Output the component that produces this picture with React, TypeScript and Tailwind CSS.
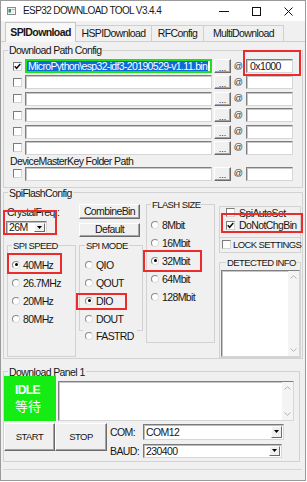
import React from "react";

const FONT = "font-['Liberation_Sans',Arial,sans-serif]";

const Check = ({ checked = false }: { checked?: boolean }) => (
  <span className="inline-flex items-center justify-center w-[9px] h-[9px] shrink-0 bg-white border border-t-[#7c7c7c] border-l-[#7c7c7c] border-r-[#d4d4d4] border-b-[#d4d4d4]">
    {checked && (
      <svg width="7" height="7" viewBox="0 0 7 7">
        <path d="M0.7 3.3 L2.6 5.3 L6.3 1.1" fill="none" stroke="#111" strokeWidth="1.5" />
      </svg>
    )}
  </span>
);

const Radio = ({ checked = false, label }: { checked?: boolean; label: string }) => (
  <div className="flex items-center h-[18px] whitespace-nowrap">
    <span className="inline-flex items-center justify-center w-[8px] h-[8px] shrink-0 rounded-full bg-white border border-t-[#8a8a8a] border-l-[#8a8a8a] border-r-[#dedede] border-b-[#dedede]">
      {checked && <span className="w-[3px] h-[3px] rounded-full bg-black" />}
    </span>
    <span className="ml-[3px] leading-none">{label}</span>
  </div>
);

const Field = ({ className = "", children }: { className?: string; children?: React.ReactNode }) => (
  <div
    className={`bg-white border border-t-[#7f7f7f] border-l-[#7f7f7f] border-r-[#d6d6d6] border-b-[#d6d6d6] shadow-[inset_1px_1px_0_#c6c6c6] ${className}`}
  >
    {children}
  </div>
);

const Btn = ({ className = "", children }: { className?: string; children?: React.ReactNode }) => (
  <div
    className={`flex items-center justify-center whitespace-nowrap bg-[#f0f0f0] border border-t-white border-l-white border-r-[#6b6b6b] border-b-[#6b6b6b] shadow-[inset_-1px_-1px_0_#a3a3a3] ${className}`}
  >
    {children}
  </div>
);

const Arrow = () => (
  <span className="m-[1px] w-[11px] shrink-0 flex items-center justify-center bg-[#f0f0f0] border border-t-white border-l-white border-r-[#6b6b6b] border-b-[#6b6b6b]">
    <svg width="5" height="3" viewBox="0 0 5 3">
      <path d="M0 0H5L2.5 3Z" fill="#000" />
    </svg>
  </span>
);

const Select = ({ value, className = "" }: { value: string; className?: string }) => (
  <div
    className={`flex bg-white border border-t-[#7a7a7a] border-l-[#7a7a7a] border-r-[#d6d6d6] border-b-[#d6d6d6] shadow-[inset_1px_1px_0_#bdbdbd] ${className}`}
  >
    <span className="flex-1 pl-[2px] flex items-center leading-none">{value}</span>
    <Arrow />
  </div>
);

const ScrollBar = () => (
  <div className="w-[11px] h-full bg-[#f4f4f4] flex flex-col items-center justify-between py-[4px]">
    <svg width="7" height="4" viewBox="0 0 7 4">
      <path d="M0.5 3.5 L3.5 0.7 L6.5 3.5" fill="none" stroke="#b4b4b4" />
    </svg>
    <svg width="7" height="4" viewBox="0 0 7 4">
      <path d="M0.5 0.5 L3.5 3.3 L6.5 0.5" fill="none" stroke="#b4b4b4" />
    </svg>
  </div>
);

const PathRow = ({ first = false }: { first?: boolean }) => (
  <div className="flex items-center h-[14px]">
    <Check checked={first} />
    {first ? (
      <div className="ml-[3px] w-[187px] h-[14px] bg-white border-2 border-[#1ee01e] flex items-stretch">
        <span className="bg-[#0c6bd6] text-white leading-[10px] pl-[1px] pr-[1px] tracking-[-0.65px] whitespace-nowrap overflow-hidden">
          MicroPython\esp32-idf3-20190529-v1.11.bin
        </span>
      </div>
    ) : (
      <Field className="ml-[3px] w-[187px] h-[14px]" />
    )}
    <Btn className="ml-[2px] w-[17px] h-[14px]">
      <span className="text-[9px] leading-none -mb-[4px] tracking-normal">...</span>
    </Btn>
    <span className="ml-[2px] w-[10px] text-[9px] leading-none text-[#333] text-center">@</span>
    <Field className="ml-[3px] w-[47px] h-[14px] flex items-center">
      {first && <span className="pl-[3px] leading-none">0x1000</span>}
    </Field>
  </div>
);

const Red = ({ className }: { className: string }) => (
  <div className={`absolute border-2 border-[#ec2c2c] pointer-events-none ${className}`} />
);

export default function App() {
  return (
    <div
      className={`relative w-[307px] h-[482px] bg-white overflow-hidden text-[10.5px] tracking-[-0.6px] text-[#161616] ${FONT}`}
    >
      <div className="w-[306px] h-[481px] border border-[#9a9a9a] bg-[#f0f0f0] flex flex-col">
        {/* Title bar */}
        <div className="h-[20px] shrink-0 bg-white flex items-center">
          <div className="ml-[6px] flex">
            <svg width="9" height="8" viewBox="0 0 9 8">
              <rect x="0.5" y="0.5" width="8" height="7" fill="#f2f2f2" stroke="#8a8a8a" />
              <rect x="1.5" y="2" width="2.5" height="3.5" fill="#2f8f7f" />
              <rect x="4.8" y="2" width="2.7" height="1" fill="#9bb5c0" />
            </svg>
          </div>
          <span className="ml-[7px] text-[10px] leading-none text-[#1a1a1a] whitespace-nowrap">
            ESP32 DOWNLOAD TOOL V3.4.4
          </span>
          <div className="ml-auto mr-[1px] flex h-full">
            <div className="w-[32px] flex items-center justify-center">
              <svg width="10" height="1" viewBox="0 0 10 1">
                <rect width="10" height="1" fill="#111" />
              </svg>
            </div>
            <div className="w-[32px] flex items-center justify-center">
              <svg width="9" height="9" viewBox="0 0 9 9">
                <rect x="0.5" y="0.5" width="8" height="8" fill="none" stroke="#111" />
              </svg>
            </div>
            <div className="w-[32px] flex items-center justify-center">
              <svg width="9" height="9" viewBox="0 0 9 9">
                <path d="M0.5 0.5L8.5 8.5M8.5 0.5L0.5 8.5" stroke="#111" />
              </svg>
            </div>
          </div>
        </div>

        {/* Tabs */}
        <div className="h-[21px] shrink-0 flex items-end pl-[4px] border-b border-[#cfcfcf] whitespace-nowrap">
          <div className="relative z-10 -mb-px h-[20px] w-[71px] bg-[#f7f7f7] border border-b-0 border-[#c8c8c8] flex items-center justify-center font-bold">
            SPIDownload
          </div>
          <div className="h-[16px] w-[76px] border border-b-0 border-l-0 border-[#cfcfcf] flex items-center justify-center">
            HSPIDownload
          </div>
          <div className="h-[16px] w-[52px] border border-b-0 border-l-0 border-[#cfcfcf] flex items-center justify-center">
            RFConfig
          </div>
          <div className="h-[16px] w-[80px] border border-b-0 border-l-0 border-[#cfcfcf] flex items-center justify-center">
            MultiDownload
          </div>
        </div>

        {/* Page */}
        <div className="flex flex-col pl-[2px] whitespace-nowrap">
          {/* Download Path Config */}
          <fieldset className="mt-[2px] w-[300px] border border-[#d2d2d2] pb-[6px]">
            <legend className="ml-[4px] px-[1px] leading-[12px]">Download Path Config</legend>
            <div className="flex flex-col pl-[9px] pt-[3px] gap-[2.4px]">
              <PathRow first />
              <PathRow />
              <PathRow />
              <PathRow />
              <PathRow />
              <PathRow />
            </div>
            <div className="pl-[6px] h-[12px] leading-[12px]">DeviceMasterKey Folder Path</div>
            <div className="pl-[9px]">
              <PathRow />
            </div>
          </fieldset>

          {/* SpiFlashConfig */}
          <fieldset className="w-[300px] border border-[#d2d2d2]">
            <legend className="ml-[4px] px-[1px] leading-[10px]">SpiFlashConfig</legend>
            <div className="flex items-start">
              {/* Col A */}
              <div className="ml-[2px] w-[71px] flex flex-col">
                <div className="mt-[8px] pl-[1px] leading-[12px] h-[12px]">CrystalFreq :</div>
                <Select value="26M" className="mt-[3px] w-[41px] h-[13px]" />
                <fieldset className="mt-[7px] ml-[1px] w-[69px] border border-[#d2d2d2] pb-[28px]">
                  <legend className="ml-[4px] px-[1px] leading-[10px] text-[9.5px]">SPI SPEED</legend>
                  <div className="pl-[4px] pt-[5px] flex flex-col">
                    <Radio checked label="40MHz" />
                    <Radio label="26.7MHz" />
                    <Radio label="20MHz" />
                    <Radio label="80MHz" />
                  </div>
                </fieldset>
              </div>

              {/* Col B */}
              <div className="ml-[2px] w-[64px] flex flex-col">
                <Btn className="mt-[6px] w-[61px] h-[15px]">CombineBin</Btn>
                <Btn className="mt-[4px] w-[61px] h-[14px]">Default</Btn>
                <fieldset className="mt-[4px] w-[64px] border border-[#d2d2d2] pb-[2px]">
                  <legend className="ml-[5px] px-[1px] leading-[10px] text-[9.5px]">SPI MODE</legend>
                  <div className="pl-[5px] pt-[5px] flex flex-col">
                    <Radio label="QIO" />
                    <Radio label="QOUT" />
                    <Radio checked label="DIO" />
                    <Radio label="DOUT" />
                  </div>
                </fieldset>
                <div className="relative -mt-[4px] ml-[4px] w-[54px] bg-[#f0f0f0] pl-[2px]">
                  <Radio label="FASTRD" />
                </div>
              </div>

              {/* Col C */}
              <div className="ml-[3px] w-[69px] flex flex-col">
                <fieldset className="mt-[2px] w-[69px] border border-[#d2d2d2] pb-[36px]">
                  <legend className="ml-[4px] px-[1px] leading-[10px] text-[9.5px]">FLASH SIZE</legend>
                  <div className="pl-[4px] pt-[6px] flex flex-col">
                    <Radio label="8Mbit" />
                    <Radio label="16Mbit" />
                    <Radio checked label="32Mbit" />
                    <Radio label="64Mbit" />
                    <Radio label="128Mbit" />
                  </div>
                </fieldset>
              </div>

              {/* Col D */}
              <div className="ml-[4px] w-[82px] flex flex-col">
                <div className="mt-[8px] h-[31px] border border-b-0 border-[#d2d2d2] pl-[6px] flex flex-col">
                  <div className="h-[12px] flex items-center">
                    <Check />
                    <span className="ml-[4px] leading-none">SpiAutoSet</span>
                  </div>
                  <div className="h-[13px] flex items-center">
                    <Check checked />
                    <span className="ml-[4px] leading-none">DoNotChgBin</span>
                  </div>
                </div>
                <div className="h-[16px] border border-[#d2d2d2] pl-[2px] flex items-center">
                  <Check />
                  <span className="ml-[2px] leading-none text-[9.5px]">LOCK SETTINGS</span>
                </div>
                <fieldset className="mt-[5px] w-[82px] border border-[#d2d2d2]">
                  <legend className="ml-[6px] px-[1px] leading-[10px] text-[9.5px]">DETECTED INFO</legend>
                  <Field className="mt-[2px] ml-[1px] w-[79px] h-[87px] flex justify-end">
                    <ScrollBar />
                  </Field>
                </fieldset>
              </div>
            </div>
          </fieldset>

          {/* Download Panel 1 */}
          <fieldset className="mt-[9px] w-[297px] border border-[#d2d2d2] pb-[3px]">
            <legend className="ml-[4px] px-[1px] leading-[8px]">Download Panel 1</legend>
            <div className="flex items-end">
              <div className="w-[52px] h-[45px] bg-[#14ec14] flex flex-col justify-center pl-[11px] text-white">
                <span className="font-bold text-[12px] leading-[15px]">IDLE</span>
                <span className="text-[13px] leading-[16px] tracking-normal font-['Noto_Sans_CJK_SC','Noto_Sans_CJK_JP',sans-serif]">
                  等待
                </span>
              </div>
              <Field className="ml-[2px] w-[236px] h-[40px] flex justify-end">
                <ScrollBar />
              </Field>
            </div>
            <div className="mt-[2px] flex items-start">
              <Btn className="w-[51px] h-[28px] text-[9.5px]">START</Btn>
              <Btn className="w-[52px] h-[28px] text-[9.5px]">STOP</Btn>
              <div className="ml-[3px] flex flex-col">
                <div className="mt-[1px] flex items-center h-[16px]">
                  <span className="w-[33px] leading-none">COM:</span>
                  <Select value="COM12" className="w-[141px] h-[16px]" />
                </div>
                <div className="mt-[4px] flex items-center h-[14px]">
                  <span className="w-[33px] leading-none">BAUD:</span>
                  <Select value="230400" className="w-[139px] h-[14px]" />
                </div>
              </div>
            </div>
          </fieldset>
          <div className="mt-[7px] mr-[3px] border-t border-[#d8d8d8]" />
        </div>
      </div>

      {/* Annotation boxes */}
      <Red className="left-[243px] top-[50px] w-[58px] h-[26px]" />
      <Red className="left-[3px] top-[210px] w-[54px] h-[25px]" />
      <Red className="left-[7px] top-[253px] w-[55px] h-[21px]" />
      <Red className="left-[76px] top-[293px] w-[51px] h-[17px]" />
      <Red className="left-[143px] top-[250px] w-[59px] h-[22px]" />
      <Red className="left-[221px] top-[213px] w-[82px] h-[20px]" />
    </div>
  );
}
